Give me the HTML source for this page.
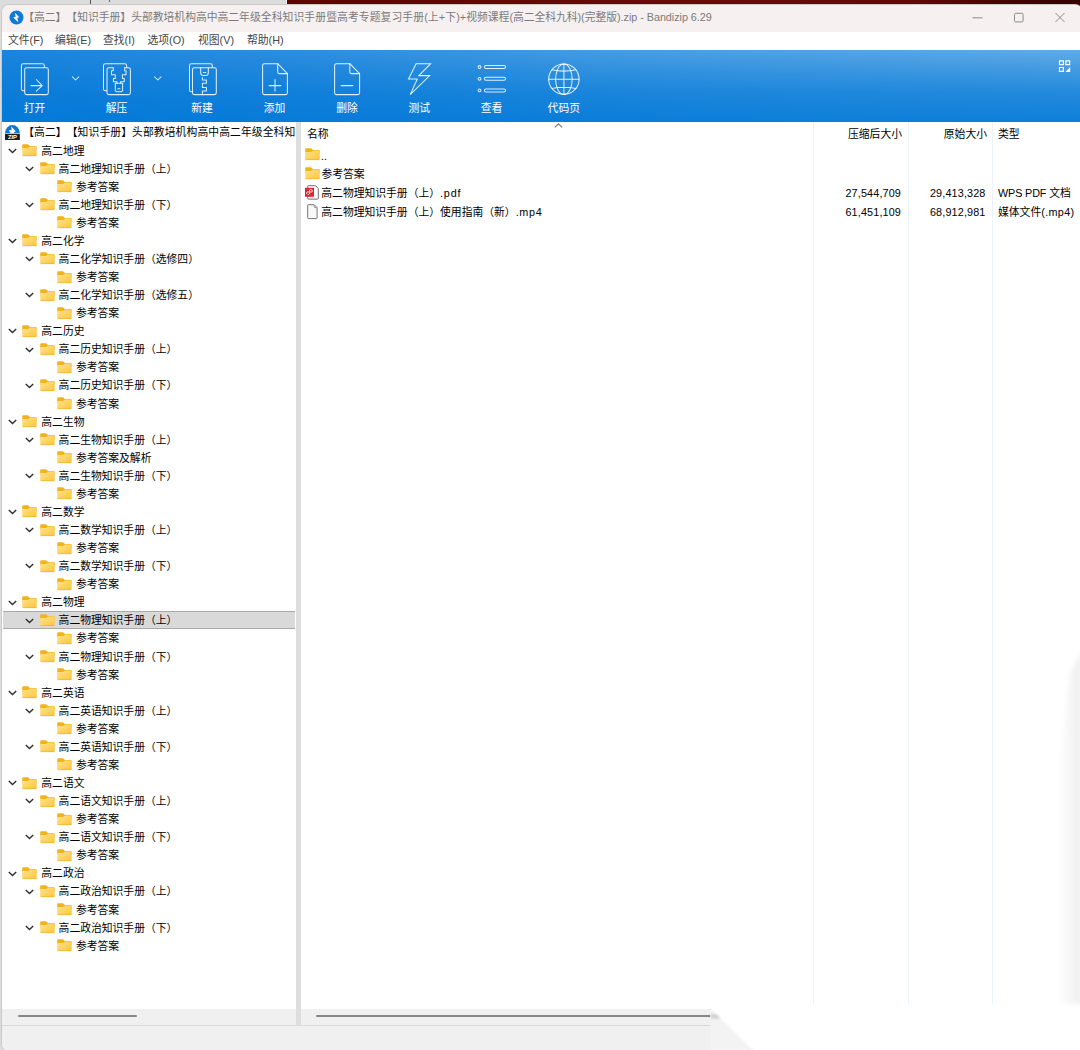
<!DOCTYPE html>
<html lang="zh-CN">
<head>
<meta charset="utf-8">
<title>Bandizip</title>
<style>
*{box-sizing:border-box;margin:0;padding:0}
html,body{width:1080px;height:1050px;overflow:hidden}
body{position:relative;background:#dcdcdc;font-family:"Liberation Sans", "Noto Sans CJK SC", sans-serif;font-size:10.8px;color:#000;line-height:1;text-spacing-trim:space-all}
.bgtop{position:absolute;left:286.5px;top:0;width:794px;height:8px;background:linear-gradient(to right,#5e0500 0%,#6b0909 50%,#650707 78%,#3a0000 97%)}
.bgtopl{position:absolute;left:0;top:0;width:285.5px;height:8px;background:#dcdcdc;border-right:1px solid #f4f4f4;box-sizing:content-box}
.bgline{position:absolute;left:90px;top:0;width:1px;height:4px;background:#5a5a5a}
.win{position:absolute;left:2px;top:4.5px;width:1080px;height:1046.5px;background:#fff;border-radius:7px 7px 7px 7px;overflow:hidden;box-shadow:0 0 0 1px #c9c9c9}
.title{position:absolute;left:0;top:0;width:100%;height:27px;background:#f6f0f0}
.title .ttx{position:absolute;left:21.2px;top:7.5px;white-space:nowrap;color:#7b7b7b;font-size:10.8px}
.menu{position:absolute;left:0;top:27px;width:100%;height:18.5px;background:#fff}
.menu span{position:absolute;top:3.5px;color:#454545;white-space:nowrap}
.tb{position:absolute;left:0;top:45.3px;width:100%;height:72px;background:linear-gradient(to bottom, rgba(0,120,215,0) 0%, rgba(0,120,215,.35) 30%, rgba(0,120,215,.65) 60%, rgba(0,120,215,.85) 100%),linear-gradient(to right,#1c84dc 0%,#2f8fdf 30%,#4a9ee3 60%,#62abe6 100%)}
.tb .lb{position:absolute;top:53px;width:60px;text-align:center;color:#fff;white-space:nowrap}
.tb svg{position:absolute;overflow:visible}
.tree{position:absolute;left:0;top:0;width:294px;height:1004.5px;overflow:hidden}
.tr{position:absolute;left:1px;width:292px;height:18.06px;overflow:hidden;white-space:nowrap}
.tr.sel{background:#d9d9d9;box-shadow:inset 0 1px 0 #a9a9a9, inset 0 -1px 0 #a9a9a9}
.tr span{position:absolute}
.tr .tx{top:4px}
.tr .ic{top:6.2px;width:9px;height:6px}
.tr .if{top:2.5px;width:15px;height:13px}
.fd{width:15px;height:13px;display:block}
.cv{width:9px;height:6px;display:block}
.zipi{position:absolute;left:2.14px;top:1.36px;width:14.86px;height:15.35px}
.split{position:absolute;left:294px;top:117.3px;width:5px;height:903px;background:#dedede}
.list{position:absolute;left:299px;top:117.3px;width:790px;height:888px;background:#fff}
.col{position:absolute;top:0;width:1px;height:887px;background:#ebf3fc}
.hd{position:absolute;top:7.5px;white-space:nowrap}
.lr{position:absolute;left:0;width:100%;height:19.2px;white-space:nowrap}
.lr span{position:absolute;top:5.1px;white-space:nowrap}
.lr span.ls{position:static}
.lr .r{letter-spacing:0.15px}
.lr svg{position:absolute}
.r{text-align:right}
.sbl{position:absolute;left:0;top:1004.5px;width:294px;height:16px;background:#f0f0f0}
.sbr{position:absolute;left:299px;top:1004.5px;width:800px;height:16px;background:#f0f0f0}
.thumb{position:absolute;height:2px;top:6.3px;background:#878787;border-radius:1px}
.status{position:absolute;left:0;top:1020.3px;width:100%;height:30px;background:#f0f0f0;border-top:1px solid #dadada}
.wipe{position:absolute;left:0;top:0;width:1080px;height:1050px;pointer-events:none}
</style>
</head>
<body>
<svg width="0" height="0" style="position:absolute">
<defs>
<linearGradient id="fg" x1="0" y1="0" x2="1" y2="1"><stop offset="0" stop-color="#ffe390"/><stop offset="1" stop-color="#fbc53a"/></linearGradient>
<g id="folder">
<path d="M0.2 1.3 Q0.2 0.3 1.2 0.3 H5.7 Q6.3 0.3 6.7 0.7 L7.9 2 H13.7 Q14.7 2 14.7 3 V6 H0.2 Z" fill="#f2b21c"/>
<path d="M0.2 4 H5.9 Q6.5 4 6.9 3.6 L7.7 2.8 Q8 2.5 8.5 2.5 H13.7 Q14.7 2.5 14.7 3.5 V11.1 Q14.7 12.1 13.7 12.1 H1.2 Q0.2 12.1 0.2 11.1 Z" fill="url(#fg)"/>
<path d="M0.5 11.7 H14.4" stroke="#e6a51e" stroke-width="0.7" stroke-opacity="0.7" fill="none"/>
</g>
<g id="zipicon">
<path d="M0 8.3 A7.43 8.3 0 0 1 14.86 8.3 Z" fill="#0a78d6"/>
<path d="M6.15 1.28 L10.86 6.51 L8.86 7.08 L9.15 8.3 L5.72 8.3 L3.86 5.57 L6.72 4.85 Z" fill="#fff"/>
<rect x="0" y="8.85" width="14.86" height="6.5" fill="#1e1e1e"/>
<text x="7.45" y="14.1" font-size="5.9" font-weight="bold" fill="#fff" text-anchor="middle" font-family='"Liberation Sans", "Noto Sans CJK SC", sans-serif'>ZIP</text>
</g>
</defs>
</svg>
<div class="bgtopl"></div><div class="bgtop"></div><div class="bgline"></div><div class="bgline" style="left:108.6px;width:1.6px;height:2px;background:#666"></div>
<div class="win">
<!--TITLE-->
<div class="title">
<svg style="position:absolute;left:7px;top:5.3px" width="15" height="15" viewBox="0 0 15 15"><circle cx="7.5" cy="7.5" r="7" fill="#0f7bd6"/><path d="M6 2.8 L10.2 7.2 L8.3 7.8 L9.3 12.2 L4.2 7.4 L6.6 6.7 Z" fill="#fff"/></svg>
<span class="ttx">【高二】【知识手册】头部教培机构高中高二年<span style="letter-spacing:0.09px">级全科知识手册暨高考专题复习手册</span><span style="letter-spacing:0.13px">(上+下)+</span><span style="letter-spacing:-0.03px">视频课程(高二全科九科)(完整版).zip - Bandizip 6.29</span></span>
<svg style="position:absolute;left:970px;top:6px" width="100" height="14" viewBox="0 0 100 14"><path d="M0.5 6.8 H10.5" stroke="#8b8b8b" stroke-width="1" fill="none"/><rect x="42.5" y="2.3" width="8.6" height="8.6" rx="1.2" fill="none" stroke="#8b8b8b" stroke-width="1"/><path d="M83.5 2 L92.5 11 M92.5 2 L83.5 11" stroke="#8b8b8b" stroke-width="1" fill="none"/></svg>
</div>
<!--MENU-->
<div class="menu">
<span style="left:6px">文件(F)</span><span style="left:53px">编辑(E)</span><span style="left:101px">查找(I)</span><span style="left:145.5px">选项(O)</span><span style="left:196px">视图(V)</span><span style="left:245px">帮助(H)</span>
</div>
<!--TOOLBAR-->
<div class="tb">
<svg style="left:0;top:0" width="1080" height="72" viewBox="2 49.8 1080 72" fill="none" stroke="#fff" stroke-opacity="0.86" stroke-width="1.05" stroke-linejoin="round" stroke-linecap="round">
<!-- open -->
<path d="M24.6 90.6 H23.2 Q21.4 90.6 21.4 88.8 V65.3 Q21.4 63.5 23.2 63.5 H42.5 Q44.3 63.5 44.3 65.3 V67.3"/>
<rect x="24.7" y="67.5" width="23.6" height="26.9" rx="1.8"/>
<path d="M30.8 85.4 H42.2 M36.3 79.3 L42.2 85.4 L36.3 91"/>
<path d="M72.4 76.6 L75.6 79.8 L78.8 76.6" stroke-width="1.05" stroke-opacity="0.8"/>
<!-- extract -->
<path d="M106.8 90.5 H105.3 Q103.5 90.5 103.5 88.7 V65.3 Q103.5 63.5 105.3 63.5 H124.8 Q126.6 63.5 126.6 65.3 V67.3"/>
<path d="M113.2 67.5 H108.8 Q107 67.5 107 69.3 V92.6 Q107 94.4 108.8 94.4 H128.6 Q130.4 94.4 130.4 92.6 V69.3 Q130.4 67.5 128.6 67.5 H124.7"/>
<path d="M113.2 67.5 V70.6 H111.5 V74.6 H115.3 V78.2 H113.4 V81.6 H117 V83 M124.7 67.5 V70.6 H126 V74.6 H122.4 V78.2 H124.3 V81.6 H120.5 V83"/>
<path d="M115.3 83.1 H122.6 V90.5 L121.6 91.5 H116.3 L115.3 90.5 Z M117.7 88.5 H120"/>
<path d="M154.6 76.6 L157.8 79.8 L161 76.6" stroke-width="1.05" stroke-opacity="0.8"/>
<!-- new -->
<path d="M192.3 91.5 H191.3 Q189.5 91.5 189.5 89.7 V65.3 Q189.5 63.5 191.3 63.5 H210.5 Q212.3 63.5 212.3 65.3 V67.3"/>
<rect x="192.5" y="67.5" width="23.8" height="26.9" rx="1.8"/>
<path d="M200.7 67.5 V72.6 Q200.7 75.3 203.4 75.3 H205.6 Q208.3 75.3 208.3 72.6 V67.5 M203.5 72.2 H205.7"/>
<path d="M202.4 77.2 V79.7 H206.4 V83.1 H202.4 V87.3 H206.4 V90.8 H202.4 V94.4"/>
<!-- add -->
<path d="M277.7 63.5 H264.4 Q262.6 63.5 262.6 65.3 V92.6 Q262.6 94.4 264.4 94.4 H285.6 Q287.4 94.4 287.4 92.6 V73.4 Z"/>
<path d="M277.7 63.5 V71.8 Q277.7 73.4 279.3 73.4 H287.4"/>
<path d="M269.1 85.4 H280.9 M275 79.3 V90.8"/>
<!-- delete -->
<path d="M349.8 63.5 H336.4 Q334.6 63.5 334.6 65.3 V92.6 Q334.6 94.4 336.4 94.4 H357.8 Q359.6 94.4 359.6 92.6 V73.4 Z"/>
<path d="M349.8 63.5 V71.8 Q349.8 73.4 351.4 73.4 H359.6"/>
<path d="M341.1 85.4 H352.9"/>
<!-- test -->
<path d="M416.1 63.5 H430.6 L418.8 75.4 H429.7 L410.2 94.4 L417.3 78.8 H408.5 Z" stroke-linejoin="miter"/>
<!-- view -->
<circle cx="479.5" cy="66.8" r="1.4"/><circle cx="479.5" cy="78.6" r="1.4"/><circle cx="479.5" cy="90.2" r="1.4"/>
<rect x="484.4" y="65.3" width="21.1" height="3" rx="1.5"/><rect x="484.4" y="77.1" width="21.1" height="3" rx="1.5"/><rect x="484.4" y="88.7" width="21.1" height="3" rx="1.5"/>
<!-- codepage -->
<circle cx="563.9" cy="78.95" r="15.2"/>
<ellipse cx="563.9" cy="78.95" rx="8.3" ry="15.2"/>
<path d="M563.9 63.8 V94.1 M548.7 78.95 H579.1 M551.9 69.6 Q563.9 72.2 575.9 69.6 M551.9 88.3 Q563.9 85.7 575.9 88.3"/>
<!-- corner icon -->
<g stroke="none" fill="#fff"><path d="M1058.9 60 h5.1 v5 h-5.1 Z M1060.1 61.2 v2.6 h2.7 v-2.6 Z" fill-rule="evenodd"/><path d="M1065.2 60 h5 v5 h-5 Z M1066.4 61.2 v2.6 h2.6 v-2.6 Z" fill-rule="evenodd"/><path d="M1058.9 66.7 h5.1 v5 h-5.1 Z M1060.1 67.9 v2.6 h2.7 v-2.6 Z" fill-rule="evenodd"/><path d="M1070.2 66.7 V71.7 H1065.4 Z"/></g>
</svg>
<span class="lb" style="left:2.5px">打开</span>
<span class="lb" style="left:84.5px">解压</span>
<span class="lb" style="left:170px">新建</span>
<span class="lb" style="left:242.5px">添加</span>
<span class="lb" style="left:315px">删除</span>
<span class="lb" style="left:387.3px">测试</span>
<span class="lb" style="left:459.5px">查看</span>
<span class="lb" style="left:531.8px">代码页</span>
</div>
<!--TREE-->
<div class="tree">
<div class="tr" style="top:119.00px"><svg class="zipi" viewBox="0 0 14.86 15.35"><use href="#zipicon"/></svg><span class="tx" style="left:20.2px;top:3.2px;letter-spacing:0.09px">【高二】【知识手册】头部教培机构高中高二年级全科知识手册暨高考专题复习手册(上+下)+视频课程(高二全科九科)(完整版).zip</span></div>
<div class="tr" style="top:137.07px"><span class="ic" style="left:4.8px"><svg class="cv" viewBox="0 0 9 6"><path d="M0.8 0.9 L4.5 4.6 L8.2 0.9" fill="none" stroke="#303030" stroke-width="1.4"/></svg></span><span class="if" style="left:19.2px"><svg class="fd" viewBox="0 0 15 13"><use href="#folder"/></svg></span><span class="tx" style="left:38.3px">高二地理</span></div>
<div class="tr" style="top:155.14px"><span class="ic" style="left:22.1px"><svg class="cv" viewBox="0 0 9 6"><path d="M0.8 0.9 L4.5 4.6 L8.2 0.9" fill="none" stroke="#303030" stroke-width="1.4"/></svg></span><span class="if" style="left:36.5px"><svg class="fd" viewBox="0 0 15 13"><use href="#folder"/></svg></span><span class="tx" style="left:55.6px">高二地理知识手册（上）</span></div>
<div class="tr" style="top:173.21px"><span class="if" style="left:53.8px"><svg class="fd" viewBox="0 0 15 13"><use href="#folder"/></svg></span><span class="tx" style="left:72.9px">参考答案</span></div>
<div class="tr" style="top:191.28px"><span class="ic" style="left:22.1px"><svg class="cv" viewBox="0 0 9 6"><path d="M0.8 0.9 L4.5 4.6 L8.2 0.9" fill="none" stroke="#303030" stroke-width="1.4"/></svg></span><span class="if" style="left:36.5px"><svg class="fd" viewBox="0 0 15 13"><use href="#folder"/></svg></span><span class="tx" style="left:55.6px">高二地理知识手册（下）</span></div>
<div class="tr" style="top:209.35px"><span class="if" style="left:53.8px"><svg class="fd" viewBox="0 0 15 13"><use href="#folder"/></svg></span><span class="tx" style="left:72.9px">参考答案</span></div>
<div class="tr" style="top:227.42px"><span class="ic" style="left:4.8px"><svg class="cv" viewBox="0 0 9 6"><path d="M0.8 0.9 L4.5 4.6 L8.2 0.9" fill="none" stroke="#303030" stroke-width="1.4"/></svg></span><span class="if" style="left:19.2px"><svg class="fd" viewBox="0 0 15 13"><use href="#folder"/></svg></span><span class="tx" style="left:38.3px">高二化学</span></div>
<div class="tr" style="top:245.49px"><span class="ic" style="left:22.1px"><svg class="cv" viewBox="0 0 9 6"><path d="M0.8 0.9 L4.5 4.6 L8.2 0.9" fill="none" stroke="#303030" stroke-width="1.4"/></svg></span><span class="if" style="left:36.5px"><svg class="fd" viewBox="0 0 15 13"><use href="#folder"/></svg></span><span class="tx" style="left:55.6px">高二化学知识手册（选修四）</span></div>
<div class="tr" style="top:263.56px"><span class="if" style="left:53.8px"><svg class="fd" viewBox="0 0 15 13"><use href="#folder"/></svg></span><span class="tx" style="left:72.9px">参考答案</span></div>
<div class="tr" style="top:281.63px"><span class="ic" style="left:22.1px"><svg class="cv" viewBox="0 0 9 6"><path d="M0.8 0.9 L4.5 4.6 L8.2 0.9" fill="none" stroke="#303030" stroke-width="1.4"/></svg></span><span class="if" style="left:36.5px"><svg class="fd" viewBox="0 0 15 13"><use href="#folder"/></svg></span><span class="tx" style="left:55.6px">高二化学知识手册（选修五）</span></div>
<div class="tr" style="top:299.70px"><span class="if" style="left:53.8px"><svg class="fd" viewBox="0 0 15 13"><use href="#folder"/></svg></span><span class="tx" style="left:72.9px">参考答案</span></div>
<div class="tr" style="top:317.77px"><span class="ic" style="left:4.8px"><svg class="cv" viewBox="0 0 9 6"><path d="M0.8 0.9 L4.5 4.6 L8.2 0.9" fill="none" stroke="#303030" stroke-width="1.4"/></svg></span><span class="if" style="left:19.2px"><svg class="fd" viewBox="0 0 15 13"><use href="#folder"/></svg></span><span class="tx" style="left:38.3px">高二历史</span></div>
<div class="tr" style="top:335.84px"><span class="ic" style="left:22.1px"><svg class="cv" viewBox="0 0 9 6"><path d="M0.8 0.9 L4.5 4.6 L8.2 0.9" fill="none" stroke="#303030" stroke-width="1.4"/></svg></span><span class="if" style="left:36.5px"><svg class="fd" viewBox="0 0 15 13"><use href="#folder"/></svg></span><span class="tx" style="left:55.6px">高二历史知识手册（上）</span></div>
<div class="tr" style="top:353.91px"><span class="if" style="left:53.8px"><svg class="fd" viewBox="0 0 15 13"><use href="#folder"/></svg></span><span class="tx" style="left:72.9px">参考答案</span></div>
<div class="tr" style="top:371.98px"><span class="ic" style="left:22.1px"><svg class="cv" viewBox="0 0 9 6"><path d="M0.8 0.9 L4.5 4.6 L8.2 0.9" fill="none" stroke="#303030" stroke-width="1.4"/></svg></span><span class="if" style="left:36.5px"><svg class="fd" viewBox="0 0 15 13"><use href="#folder"/></svg></span><span class="tx" style="left:55.6px">高二历史知识手册（下）</span></div>
<div class="tr" style="top:390.05px"><span class="if" style="left:53.8px"><svg class="fd" viewBox="0 0 15 13"><use href="#folder"/></svg></span><span class="tx" style="left:72.9px">参考答案</span></div>
<div class="tr" style="top:408.12px"><span class="ic" style="left:4.8px"><svg class="cv" viewBox="0 0 9 6"><path d="M0.8 0.9 L4.5 4.6 L8.2 0.9" fill="none" stroke="#303030" stroke-width="1.4"/></svg></span><span class="if" style="left:19.2px"><svg class="fd" viewBox="0 0 15 13"><use href="#folder"/></svg></span><span class="tx" style="left:38.3px">高二生物</span></div>
<div class="tr" style="top:426.19px"><span class="ic" style="left:22.1px"><svg class="cv" viewBox="0 0 9 6"><path d="M0.8 0.9 L4.5 4.6 L8.2 0.9" fill="none" stroke="#303030" stroke-width="1.4"/></svg></span><span class="if" style="left:36.5px"><svg class="fd" viewBox="0 0 15 13"><use href="#folder"/></svg></span><span class="tx" style="left:55.6px">高二生物知识手册（上）</span></div>
<div class="tr" style="top:444.26px"><span class="if" style="left:53.8px"><svg class="fd" viewBox="0 0 15 13"><use href="#folder"/></svg></span><span class="tx" style="left:72.9px">参考答案及解析</span></div>
<div class="tr" style="top:462.33px"><span class="ic" style="left:22.1px"><svg class="cv" viewBox="0 0 9 6"><path d="M0.8 0.9 L4.5 4.6 L8.2 0.9" fill="none" stroke="#303030" stroke-width="1.4"/></svg></span><span class="if" style="left:36.5px"><svg class="fd" viewBox="0 0 15 13"><use href="#folder"/></svg></span><span class="tx" style="left:55.6px">高二生物知识手册（下）</span></div>
<div class="tr" style="top:480.40px"><span class="if" style="left:53.8px"><svg class="fd" viewBox="0 0 15 13"><use href="#folder"/></svg></span><span class="tx" style="left:72.9px">参考答案</span></div>
<div class="tr" style="top:498.47px"><span class="ic" style="left:4.8px"><svg class="cv" viewBox="0 0 9 6"><path d="M0.8 0.9 L4.5 4.6 L8.2 0.9" fill="none" stroke="#303030" stroke-width="1.4"/></svg></span><span class="if" style="left:19.2px"><svg class="fd" viewBox="0 0 15 13"><use href="#folder"/></svg></span><span class="tx" style="left:38.3px">高二数学</span></div>
<div class="tr" style="top:516.54px"><span class="ic" style="left:22.1px"><svg class="cv" viewBox="0 0 9 6"><path d="M0.8 0.9 L4.5 4.6 L8.2 0.9" fill="none" stroke="#303030" stroke-width="1.4"/></svg></span><span class="if" style="left:36.5px"><svg class="fd" viewBox="0 0 15 13"><use href="#folder"/></svg></span><span class="tx" style="left:55.6px">高二数学知识手册（上）</span></div>
<div class="tr" style="top:534.61px"><span class="if" style="left:53.8px"><svg class="fd" viewBox="0 0 15 13"><use href="#folder"/></svg></span><span class="tx" style="left:72.9px">参考答案</span></div>
<div class="tr" style="top:552.68px"><span class="ic" style="left:22.1px"><svg class="cv" viewBox="0 0 9 6"><path d="M0.8 0.9 L4.5 4.6 L8.2 0.9" fill="none" stroke="#303030" stroke-width="1.4"/></svg></span><span class="if" style="left:36.5px"><svg class="fd" viewBox="0 0 15 13"><use href="#folder"/></svg></span><span class="tx" style="left:55.6px">高二数学知识手册（下）</span></div>
<div class="tr" style="top:570.75px"><span class="if" style="left:53.8px"><svg class="fd" viewBox="0 0 15 13"><use href="#folder"/></svg></span><span class="tx" style="left:72.9px">参考答案</span></div>
<div class="tr" style="top:588.82px"><span class="ic" style="left:4.8px"><svg class="cv" viewBox="0 0 9 6"><path d="M0.8 0.9 L4.5 4.6 L8.2 0.9" fill="none" stroke="#303030" stroke-width="1.4"/></svg></span><span class="if" style="left:19.2px"><svg class="fd" viewBox="0 0 15 13"><use href="#folder"/></svg></span><span class="tx" style="left:38.3px">高二物理</span></div>
<div class="tr sel" style="top:606.89px"><span class="ic" style="left:22.1px"><svg class="cv" viewBox="0 0 9 6"><path d="M0.8 0.9 L4.5 4.6 L8.2 0.9" fill="none" stroke="#303030" stroke-width="1.4"/></svg></span><span class="if" style="left:36.5px"><svg class="fd" viewBox="0 0 15 13"><use href="#folder"/></svg></span><span class="tx" style="left:55.6px">高二物理知识手册（上）</span></div>
<div class="tr" style="top:624.96px"><span class="if" style="left:53.8px"><svg class="fd" viewBox="0 0 15 13"><use href="#folder"/></svg></span><span class="tx" style="left:72.9px">参考答案</span></div>
<div class="tr" style="top:643.03px"><span class="ic" style="left:22.1px"><svg class="cv" viewBox="0 0 9 6"><path d="M0.8 0.9 L4.5 4.6 L8.2 0.9" fill="none" stroke="#303030" stroke-width="1.4"/></svg></span><span class="if" style="left:36.5px"><svg class="fd" viewBox="0 0 15 13"><use href="#folder"/></svg></span><span class="tx" style="left:55.6px">高二物理知识手册（下）</span></div>
<div class="tr" style="top:661.10px"><span class="if" style="left:53.8px"><svg class="fd" viewBox="0 0 15 13"><use href="#folder"/></svg></span><span class="tx" style="left:72.9px">参考答案</span></div>
<div class="tr" style="top:679.17px"><span class="ic" style="left:4.8px"><svg class="cv" viewBox="0 0 9 6"><path d="M0.8 0.9 L4.5 4.6 L8.2 0.9" fill="none" stroke="#303030" stroke-width="1.4"/></svg></span><span class="if" style="left:19.2px"><svg class="fd" viewBox="0 0 15 13"><use href="#folder"/></svg></span><span class="tx" style="left:38.3px">高二英语</span></div>
<div class="tr" style="top:697.24px"><span class="ic" style="left:22.1px"><svg class="cv" viewBox="0 0 9 6"><path d="M0.8 0.9 L4.5 4.6 L8.2 0.9" fill="none" stroke="#303030" stroke-width="1.4"/></svg></span><span class="if" style="left:36.5px"><svg class="fd" viewBox="0 0 15 13"><use href="#folder"/></svg></span><span class="tx" style="left:55.6px">高二英语知识手册（上）</span></div>
<div class="tr" style="top:715.31px"><span class="if" style="left:53.8px"><svg class="fd" viewBox="0 0 15 13"><use href="#folder"/></svg></span><span class="tx" style="left:72.9px">参考答案</span></div>
<div class="tr" style="top:733.38px"><span class="ic" style="left:22.1px"><svg class="cv" viewBox="0 0 9 6"><path d="M0.8 0.9 L4.5 4.6 L8.2 0.9" fill="none" stroke="#303030" stroke-width="1.4"/></svg></span><span class="if" style="left:36.5px"><svg class="fd" viewBox="0 0 15 13"><use href="#folder"/></svg></span><span class="tx" style="left:55.6px">高二英语知识手册（下）</span></div>
<div class="tr" style="top:751.45px"><span class="if" style="left:53.8px"><svg class="fd" viewBox="0 0 15 13"><use href="#folder"/></svg></span><span class="tx" style="left:72.9px">参考答案</span></div>
<div class="tr" style="top:769.52px"><span class="ic" style="left:4.8px"><svg class="cv" viewBox="0 0 9 6"><path d="M0.8 0.9 L4.5 4.6 L8.2 0.9" fill="none" stroke="#303030" stroke-width="1.4"/></svg></span><span class="if" style="left:19.2px"><svg class="fd" viewBox="0 0 15 13"><use href="#folder"/></svg></span><span class="tx" style="left:38.3px">高二语文</span></div>
<div class="tr" style="top:787.59px"><span class="ic" style="left:22.1px"><svg class="cv" viewBox="0 0 9 6"><path d="M0.8 0.9 L4.5 4.6 L8.2 0.9" fill="none" stroke="#303030" stroke-width="1.4"/></svg></span><span class="if" style="left:36.5px"><svg class="fd" viewBox="0 0 15 13"><use href="#folder"/></svg></span><span class="tx" style="left:55.6px">高二语文知识手册（上）</span></div>
<div class="tr" style="top:805.66px"><span class="if" style="left:53.8px"><svg class="fd" viewBox="0 0 15 13"><use href="#folder"/></svg></span><span class="tx" style="left:72.9px">参考答案</span></div>
<div class="tr" style="top:823.73px"><span class="ic" style="left:22.1px"><svg class="cv" viewBox="0 0 9 6"><path d="M0.8 0.9 L4.5 4.6 L8.2 0.9" fill="none" stroke="#303030" stroke-width="1.4"/></svg></span><span class="if" style="left:36.5px"><svg class="fd" viewBox="0 0 15 13"><use href="#folder"/></svg></span><span class="tx" style="left:55.6px">高二语文知识手册（下）</span></div>
<div class="tr" style="top:841.80px"><span class="if" style="left:53.8px"><svg class="fd" viewBox="0 0 15 13"><use href="#folder"/></svg></span><span class="tx" style="left:72.9px">参考答案</span></div>
<div class="tr" style="top:859.87px"><span class="ic" style="left:4.8px"><svg class="cv" viewBox="0 0 9 6"><path d="M0.8 0.9 L4.5 4.6 L8.2 0.9" fill="none" stroke="#303030" stroke-width="1.4"/></svg></span><span class="if" style="left:19.2px"><svg class="fd" viewBox="0 0 15 13"><use href="#folder"/></svg></span><span class="tx" style="left:38.3px">高二政治</span></div>
<div class="tr" style="top:877.94px"><span class="ic" style="left:22.1px"><svg class="cv" viewBox="0 0 9 6"><path d="M0.8 0.9 L4.5 4.6 L8.2 0.9" fill="none" stroke="#303030" stroke-width="1.4"/></svg></span><span class="if" style="left:36.5px"><svg class="fd" viewBox="0 0 15 13"><use href="#folder"/></svg></span><span class="tx" style="left:55.6px">高二政治知识手册（上）</span></div>
<div class="tr" style="top:896.01px"><span class="if" style="left:53.8px"><svg class="fd" viewBox="0 0 15 13"><use href="#folder"/></svg></span><span class="tx" style="left:72.9px">参考答案</span></div>
<div class="tr" style="top:914.08px"><span class="ic" style="left:22.1px"><svg class="cv" viewBox="0 0 9 6"><path d="M0.8 0.9 L4.5 4.6 L8.2 0.9" fill="none" stroke="#303030" stroke-width="1.4"/></svg></span><span class="if" style="left:36.5px"><svg class="fd" viewBox="0 0 15 13"><use href="#folder"/></svg></span><span class="tx" style="left:55.6px">高二政治知识手册（下）</span></div>
<div class="tr" style="top:932.15px"><span class="if" style="left:53.8px"><svg class="fd" viewBox="0 0 15 13"><use href="#folder"/></svg></span><span class="tx" style="left:72.9px">参考答案</span></div>
</div>
<div class="split"></div>
<!--LIST-->
<div class="list">
<div class="col" style="left:512px"></div><div class="col" style="left:606.5px"></div><div class="col" style="left:690.5px"></div>
<span class="hd" style="left:6px">名称</span>
<svg style="position:absolute;left:252.5px;top:1.6px" width="9" height="5" viewBox="0 0 9 5"><path d="M0.8 4.4 L4.5 0.9 L8.2 4.4" fill="none" stroke="#7a7a7a" stroke-width="1.2"/></svg>
<span class="hd r" style="left:512px;width:89px">压缩后大小</span>
<span class="hd r" style="left:606px;width:80px">原始大小</span>
<span class="hd" style="left:697px">类型</span>
<div class="lr" style="top:23px"><svg class="fd" style="left:4px;top:2.8px" viewBox="0 0 15 13"><use href="#folder"/></svg><span style="left:20px;top:6.4px">..</span></div>
<div class="lr" style="top:42.2px"><svg class="fd" style="left:4px;top:2.8px" viewBox="0 0 15 13"><use href="#folder"/></svg><span style="left:20.4px">参考答案</span></div>
<div class="lr" style="top:61.4px"><svg style="left:4px;top:1.8px" width="16" height="16" viewBox="0 0 16 16"><path d="M3.3 0.7 H10.6 L13.3 3.4 V13.3 Q13.3 14.1 12.5 14.1 H3.5 Q2.7 14.1 2.7 13.3 V1.3 Q2.7 0.7 3.3 0.7 Z" fill="#fff" stroke="#6e6e6e" stroke-width="1"/><rect x="0" y="2.8" width="9" height="9" fill="#e8222f"/><path d="M2.2 8.9 Q1.2 8.6 1.6 7.6 Q2 6.8 3.2 6.9 L4.6 7 M4.4 8.6 Q4 9.6 2.9 9.4 M4.5 8.8 V5.2 Q4.5 4.7 5 4.7 H6.6 Q7.2 4.7 7.2 5.3 V6.4 Q7.2 7 6.6 7 H4.6" fill="none" stroke="#fff" stroke-width="0.9"/></svg><span style="left:20.3px">高二物理知识手册（上）<span class="ls" style="letter-spacing:0.8px">.pdf</span></span><span class="r" style="left:512px;width:88px">27,544,709</span><span class="r" style="left:606px;width:78.5px">29,413,328</span><span style="left:697px"><span class="ls" style="letter-spacing:-0.12px">WPS PDF </span>文档</span></div>
<div class="lr" style="top:80.6px"><svg style="left:4px;top:1.8px" width="16" height="16" viewBox="0 0 16 16"><path d="M3.3 0.7 H9.2 L12.1 3.6 V13.8 Q12.1 14.6 11.3 14.6 H3.5 Q2.7 14.6 2.7 13.8 V1.3 Q2.7 0.7 3.3 0.7 Z" fill="#f8f8f8" stroke="#747474" stroke-width="1"/><path d="M9.2 1 V2.8 Q9.2 3.6 10 3.6 H11.8" fill="none" stroke="#8a8a8a" stroke-width="0.9"/></svg><span style="left:20.3px">高二物理知识手册（上）使用指南（新）<span class="ls" style="letter-spacing:0.7px">.mp4</span></span><span class="r" style="left:512px;width:88px">61,451,109</span><span class="r" style="left:606px;width:78.5px">68,912,981</span><span style="left:697px">媒体文件<span class="ls" style="letter-spacing:0.35px">(.mp4)</span></span></div>
</div>
<div class="sbl"><div class="thumb" style="left:16px;width:119px"></div></div>
<div class="sbr"><div class="thumb" style="left:15px;width:394.4px;border-radius:1px 0 0 1px"></div></div>
<div class="status"></div>
</div>
<svg class="wipe" viewBox="0 0 1080 1050"><defs><filter id="bl" x="-50%" y="-100%" width="200%" height="300%"><feGaussianBlur stdDeviation="1.6"/></filter><filter id="bl2"><feGaussianBlur stdDeviation="1.2"/></filter><linearGradient id="wg" gradientUnits="userSpaceOnUse" x1="1057" y1="0" x2="1080" y2="0"><stop offset="0" stop-color="#000" stop-opacity="0"/><stop offset="1" stop-color="#000" stop-opacity="0.06"/></linearGradient><filter id="bl3" x="-50%" y="-10%" width="200%" height="120%"><feGaussianBlur stdDeviation="2"/></filter><linearGradient id="wd" x1="0" y1="1" x2="1" y2="0"><stop offset="0.4" stop-color="#000" stop-opacity="0"/><stop offset="0.5" stop-color="#000" stop-opacity="0.1"/></linearGradient></defs>
<path d="M710.4 1007 L710.4 1050 L760 1050 L760 1007 Z" fill="#f3f3f3"/>
<ellipse cx="715.5" cy="1016.2" rx="6" ry="2.2" fill="#000" opacity="0.16" filter="url(#bl)"/>
<path d="M709 1006.5 L752.5 1050 L1080 1050 L1080 1005 L709 1005 Z" fill="#fff" filter="url(#bl2)"/>
<path d="M712.5 1008 L754.5 1050 L1080 1050 L1080 1005 L712 1005 Z" fill="#fff"/>
<path d="M1082 652 L1070 672 L1060 760 L1056 1004 L1082 1004 Z" fill="url(#wg)" filter="url(#bl3)"/>
</svg>
</body>
</html>
